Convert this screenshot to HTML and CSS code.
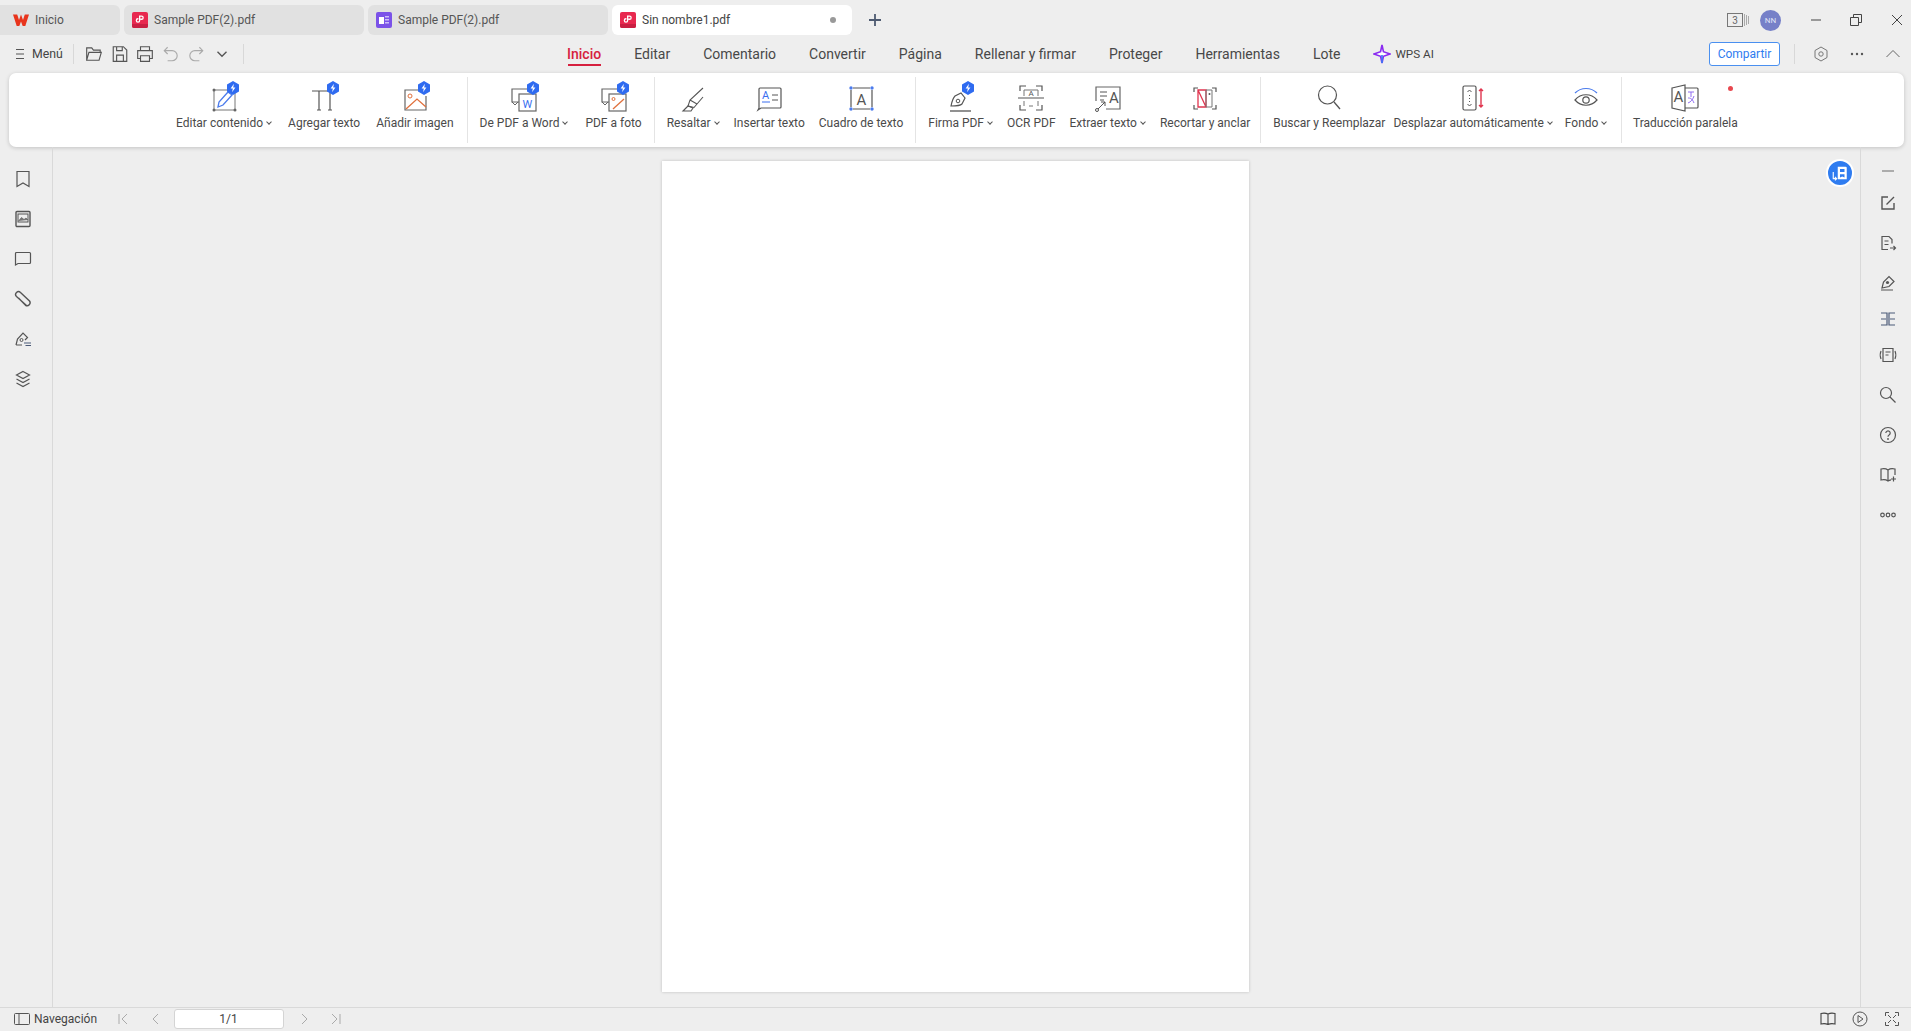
FILE: index.html
```html
<!DOCTYPE html>
<html lang="es">
<head>
  <meta charset="UTF-8">
  <title>Sin nombre1.pdf - WPS Office</title>
  <link rel="stylesheet" href="styles.css">
</head>
<body>

  <svg class="defs" width="0" height="0">
    <symbol id="badge" viewBox="0 0 14 14">
      <path d="M7 0l6 3.4v7.2L7 14l-6-3.4V3.4z" fill="#2f6bf0"/>
      <path d="M7.9 2.8L4.6 7.6h2.2l-.7 3.6 3.3-4.8H7.2z" fill="#fff"/>
    </symbol>
    <symbol id="pdf" viewBox="0 0 16 16">
      <rect width="16" height="16" rx="2" fill="#e8284f"/>
      <path d="M0 12h16v2a2 2 0 0 1-2 2H2a2 2 0 0 1-2-2z" fill="#c91f42"/>
      <path d="M7 3.5h2.6a2.2 2.2 0 0 1 0 4.4H8.4V6.6h1.2a.9.9 0 0 0 0-1.8H8.3v3.6a2.3 2.3 0 1 1-2.3-2.3h.4v1.3H6a1 1 0 1 0 1 1z" fill="#fff"/>
    </symbol>
  </svg>

  <!-- tabs -->
  <div class="tabbar">
    <div class="tab tab-home">
      <svg class="tab-icon" viewBox="0 0 16 16"><path d="M0 2.5h4.2L6 8l2-5.500L10 8l1.800-5.500H16L12.300 14H9.700L8 9.500 6.300 14H3.700z" fill="#e8341c"/></svg>
      <span>Inicio</span>
    </div>
    <div class="tab">
      <svg class="tab-icon"><use href="#pdf"/></svg>
      <span>Sample PDF(2).pdf</span>
    </div>
    <div class="tab">
      <svg class="tab-icon" viewBox="0 0 16 16"><rect width="16" height="16" rx="2" fill="#7b52e8"/><rect x="3" y="5" width="5" height="7" fill="#fff"/><rect x="9" y="4" width="4" height="1.500" fill="#cdbdf7"/><rect x="9" y="7" width="4" height="1.500" fill="#cdbdf7"/><rect x="9" y="10" width="4" height="1.500" fill="#cdbdf7"/></svg>
      <span>Sample PDF(2).pdf</span>
    </div>
    <div class="tab tab-active">
      <svg class="tab-icon"><use href="#pdf"/></svg>
      <span>Sin nombre1.pdf</span>
      <i class="tab-dot"></i>
    </div>
    <svg class="tab-add" viewBox="0 0 14 14"><path d="M7 1v12M1 7h12" stroke="#4d5a70" stroke-width="1.800" fill="none"/></svg>

    <div class="win-controls">
      <svg class="win-count" viewBox="0 0 22 16"><rect x=".5" y="1.500" width="15" height="13" fill="none" stroke="#777"/><path d="M17.500 2v12M19.500 3v10M21.500 4v8" stroke="#aaa" fill="none"/><text x="8" y="12" class="count-text">3</text></svg>
      <span class="avatar">NN</span>
      <svg class="win-btn win-min" viewBox="0 0 12 12"><path d="M1 6h10" stroke="#444" fill="none"/></svg>
      <svg class="win-btn win-max" viewBox="0 0 12 12"><path d="M.5 3.500h8v8h-8zM3.500 3.500v-3h8v8h-3" stroke="#444" fill="none"/></svg>
      <svg class="win-btn" viewBox="0 0 12 12"><path d="M1 1l10 10M11 1L1 11" stroke="#444" fill="none"/></svg>
    </div>
  </div>

  <!-- menu row -->
  <div class="menubar">
    <div class="quick">
      <svg class="menu-lines" viewBox="0 0 10 12"><path d="M1 1.500h8M1 6h8M1 10.500h8" stroke="#555" stroke-width="1.200" fill="none"/></svg>
      <span class="menu-label">Menú</span>
      <i class="quick-sep"></i>
      <svg class="quick-icon" viewBox="0 0 16 16"><path d="M1.500 13.500v-11h4.500l1.500 2h6v2M1.500 13.500l2-7h11l-2 7z" fill="none" stroke="#555"/></svg>
      <svg class="quick-icon" viewBox="0 0 16 16"><path d="M2 1.500h9l3 3v10H2zM5 14.500V9h6v5.500M5 1.500V5h5V1.500" fill="none" stroke="#555"/></svg>
      <svg class="quick-icon" viewBox="0 0 16 16"><path d="M4 5V1.500h8V5M4 12H1.500V5h13v7H12M4 9.500h8v5H4z" fill="none" stroke="#555"/></svg>
      <svg class="quick-icon" viewBox="0 0 16 16"><path d="M5 2L2 5l3 3M2 5h7a4.500 4.500 0 0 1 0 9H5" fill="none" stroke="#aaa"/></svg>
      <svg class="quick-icon" viewBox="0 0 16 16"><path d="M11 2l3 3-3 3M14 5H7a4.500 4.500 0 0 0 0 9h4" fill="none" stroke="#aaa"/></svg>
      <svg class="quick-icon" viewBox="0 0 16 16"><path d="M4 6l4 4 4-4" fill="none" stroke="#555" stroke-width="1.200"/></svg>
      <i class="quick-sep"></i>
    </div>

    <nav class="nav">
      <a class="nav-item nav-active">Inicio</a>
      <a class="nav-item">Editar</a>
      <a class="nav-item">Comentario</a>
      <a class="nav-item">Convertir</a>
      <a class="nav-item">Página</a>
      <a class="nav-item">Rellenar y firmar</a>
      <a class="nav-item">Proteger</a>
      <a class="nav-item">Herramientas</a>
      <a class="nav-item">Lote</a>
      <a class="nav-ai">
        <svg viewBox="0 0 20 22"><path d="M10 1l1.600 7.500L19 11l-7.400 2.500L10 21l-1.600-7.500L1 11l7.400-2.500z" fill="#fff" stroke="#8a2bf0" stroke-width="1.800"/><path d="M10 12v9" stroke="#3a7bf5" stroke-width="1.800"/></svg>
        <span>WPS AI</span>
      </a>
    </nav>

    <div class="menu-right">
      <button class="share">Compartir</button>
      <i class="quick-sep"></i>
      <svg class="menu-icon" viewBox="0 0 16 16"><path d="M8 1l6 3.500v7L8 15l-6-3.500v-7z" fill="none" stroke="#777"/><circle cx="8" cy="8" r="2.200" fill="none" stroke="#777"/></svg>
      <svg class="menu-icon" viewBox="0 0 16 16"><circle cx="3" cy="8" r="1.200" fill="#555"/><circle cx="8" cy="8" r="1.200" fill="#555"/><circle cx="13" cy="8" r="1.200" fill="#555"/></svg>
      <svg class="menu-icon" viewBox="0 0 16 16"><path d="M1.500 11L8 4.500 14.500 11" fill="none" stroke="#666"/></svg>
    </div>
  </div>

  <!-- ribbon -->
  <div class="ribbon">
    <div class="group group-content">
      <div class="tool">
        <svg class="tool-icon" viewBox="0 0 32 32">
          <rect x="6" y="9" width="21" height="20" fill="none" stroke="#777"/>
          <g fill="#666"><circle cx="6" cy="9" r="1.500"/><circle cx="27" cy="9" r="1.500"/><circle cx="6" cy="29" r="1.500"/><circle cx="27" cy="29" r="1.500"/></g>
          <path d="M10 26l1-5 9-10 4 3-9 10z" fill="#fff" stroke="#4b7bec" stroke-width="1.300"/>
          <use href="#badge" x="18" y="0" width="14" height="14"/>
        </svg>
        <span class="tool-label">Editar contenido<i class="caret"></i></span>
      </div>
      <div class="tool">
        <svg class="tool-icon" viewBox="0 0 32 32">
          <path d="M4 10h20M11 10v19M22 10v19M9 29h4M20 29h4" fill="none" stroke="#555" stroke-width="1.200"/>
          <use href="#badge" x="18" y="0" width="14" height="14"/>
        </svg>
        <span class="tool-label">Agregar texto</span>
      </div>
      <div class="tool">
        <svg class="tool-icon" viewBox="0 0 32 32">
          <path d="M19 9H6v20h21V15" fill="none" stroke="#666" stroke-width="1.200"/>
          <circle cx="11" cy="15" r="2" fill="none" stroke="#e0703c"/>
          <path d="M7 28l11-10 9 8" fill="none" stroke="#e0703c" stroke-width="1.300"/>
          <use href="#badge" x="18" y="0" width="14" height="14"/>
        </svg>
        <span class="tool-label">Añadir imagen</span>
      </div>
    </div>

    <div class="group group-convert">
      <div class="tool">
        <svg class="tool-icon" viewBox="0 0 32 32">
          <path d="M11 21H4V8h18" fill="none" stroke="#666" stroke-width="1.200"/>
          <path d="M4 21l3 3 3-3" fill="none" stroke="#666"/>
          <rect x="11" y="13" width="17" height="17" fill="#fff" stroke="#666" stroke-width="1.200"/>
          <text x="19.500" y="26.500" class="icon-letter icon-blue">W</text>
          <use href="#badge" x="18" y="0" width="14" height="14"/>
        </svg>
        <span class="tool-label">De PDF a Word<i class="caret"></i></span>
      </div>
      <div class="tool">
        <svg class="tool-icon" viewBox="0 0 32 32">
          <path d="M11 21H4V8h18" fill="none" stroke="#666" stroke-width="1.200"/>
          <path d="M4 21l3 3 3-3" fill="none" stroke="#666"/>
          <rect x="11" y="13" width="17" height="17" fill="#fff" stroke="#666" stroke-width="1.200"/>
          <circle cx="15.500" cy="18" r="1.500" fill="none" stroke="#e0703c"/>
          <path d="M15 28l11-10" stroke="#e0703c" stroke-width="1.300" fill="none"/>
          <use href="#badge" x="18" y="0" width="14" height="14"/>
        </svg>
        <span class="tool-label">PDF a foto</span>
      </div>
    </div>

    <div class="group">
      <div class="tool">
        <svg class="tool-icon" viewBox="0 0 32 32">
          <path d="M26 7L13 19l-2 6 6 1.500 3-3.500 6-7M13 19l7 4" fill="none" stroke="#555" stroke-width="1.100"/>
          <path d="M6 30l5-5 5 2-2 3z" fill="none" stroke="#555" stroke-width="1.100"/>
        </svg>
        <span class="tool-label">Resaltar<i class="caret"></i></span>
      </div>
      <div class="tool">
        <svg class="tool-icon" viewBox="0 0 32 32">
          <path d="M6 27V8a1 1 0 0 1 1-1h20a1 1 0 0 1 1 1v18a1 1 0 0 1-1 1H8l-3 2z" fill="none" stroke="#555" stroke-width="1.200"/>
          <text x="12.500" y="18" class="icon-letter icon-blue">A</text>
          <path d="M9 21h8" stroke="#3a6ff0" fill="none"/>
          <path d="M19 14h6M19 19h6" stroke="#555" fill="none"/>
        </svg>
        <span class="tool-label">Insertar texto</span>
      </div>
      <div class="tool">
        <svg class="tool-icon" viewBox="0 0 32 32">
          <path d="M8 7h17M8 28h17M6 9v17M27 9v17" stroke="#555" fill="none" stroke-width="1.200"/>
          <g fill="#4b7bec"><circle cx="6" cy="7" r="1.700"/><circle cx="27" cy="7" r="1.700"/><circle cx="6" cy="28" r="1.700"/><circle cx="27" cy="28" r="1.700"/></g>
          <text x="16.500" y="24" class="icon-letter icon-big">A</text>
        </svg>
        <span class="tool-label">Cuadro de texto</span>
      </div>
    </div>

    <div class="group group-sign">
      <div class="tool">
        <svg class="tool-icon" viewBox="0 0 32 32">
          <path d="M6 25c1-5 2-8 4-10l6-3 4 5-3 6c-2 2-6 2-11 2z" fill="none" stroke="#555" stroke-width="1.200"/>
          <circle cx="13" cy="20" r="1.800" fill="none" stroke="#555"/>
          <path d="M5 30h21" stroke="#555" stroke-width="1.300" fill="none"/>
          <use href="#badge" x="16" y="0" width="14" height="14"/>
        </svg>
        <span class="tool-label">Firma PDF<i class="caret"></i></span>
      </div>
      <div class="tool">
        <svg class="tool-icon" viewBox="0 0 32 32">
          <path d="M5 10V5h6M21 5h6v5M5 24v5h6M21 29h6v-5M3 17h26" stroke="#555" fill="none" stroke-width="1.200"/>
          <path d="M9 15V9h14v6M9 20v5M23 20v5M14 25h4" stroke="#777" fill="none"/>
          <text x="16" y="15" class="icon-letter icon-small">A</text>
        </svg>
        <span class="tool-label">OCR PDF</span>
      </div>
      <div class="tool">
        <svg class="tool-icon" viewBox="0 0 32 32">
          <path d="M4 20V6h24v22H14" fill="none" stroke="#666" stroke-width="1.200"/>
          <path d="M8 11h7M8 15h7M8 19h4" stroke="#555" fill="none"/>
          <path d="M5 29l8-8M9 21h4v4" stroke="#555" fill="none"/>
          <circle cx="5" cy="29" r="1.500" fill="#fff" stroke="#555"/>
          <text x="22" y="22" class="icon-letter icon-big">A</text>
        </svg>
        <span class="tool-label">Extraer texto<i class="caret"></i></span>
      </div>
      <div class="tool">
        <svg class="tool-icon" viewBox="0 0 32 32">
          <path d="M9 7H5v4M23 7h4v4M9 28H5v-4M23 28h4v-4" fill="none" stroke="#555" stroke-width="1.200"/>
          <path d="M9 9h8v17H9zM9 9l8 17" fill="none" stroke="#e0354f" stroke-width="1.300"/>
          <path d="M17 9v17h6V9z" fill="none" stroke="#777"/>
          <circle cx="20.500" cy="13" r="1" fill="#555"/>
        </svg>
        <span class="tool-label">Recortar y anclar</span>
      </div>
    </div>

    <div class="group group-search">
      <div class="tool">
        <svg class="tool-icon" viewBox="0 0 32 32">
          <circle cx="14.500" cy="14" r="9" fill="none" stroke="#555" stroke-width="1.200"/>
          <path d="M21 21l6 7" stroke="#555" stroke-width="1.300" fill="none"/>
        </svg>
        <span class="tool-label">Buscar y Reemplazar</span>
      </div>
      <div class="tool tool-snug">
        <svg class="tool-icon" viewBox="0 0 32 32">
          <rect x="6" y="5" width="13" height="24" rx="1.500" fill="none" stroke="#555" stroke-width="1.200"/>
          <path d="M10.500 11l2-2 2 2M10.500 23l2 2 2-2M12.500 14v1M12.500 17v1M12.500 20v1" fill="none" stroke="#555"/>
          <path d="M24 8v18M22 10l2-2 2 2M22 24l2 2 2-2" fill="none" stroke="#e0354f" stroke-width="1.400"/>
        </svg>
        <span class="tool-label">Desplazar automáticamente<i class="caret"></i></span>
      </div>
      <div class="tool">
        <svg class="tool-icon" viewBox="0 0 32 32">
          <path d="M5 12c6-6 16-6 22 0" fill="none" stroke="#4b7bec" stroke-width="1.200"/>
          <path d="M5 19c6-7 16-7 22 0-6 7-16 7-22 0z" fill="none" stroke="#555" stroke-width="1.200"/>
          <circle cx="16" cy="19" r="3.200" fill="none" stroke="#555" stroke-width="1.200"/>
        </svg>
        <span class="tool-label">Fondo<i class="caret"></i></span>
      </div>
    </div>

    <div class="group group-last">
      <div class="tool tool-new">
        <svg class="tool-icon" viewBox="0 0 32 32">
          <path d="M3 7l13-3v26L3 27z" fill="#fff" stroke="#555" stroke-width="1.200"/>
          <path d="M16 7h12a1 1 0 0 1 1 1v18a1 1 0 0 1-1 1H16" fill="none" stroke="#555" stroke-width="1.200"/>
          <text x="9.500" y="21" class="icon-letter icon-big">A</text>
          <path d="M19 11h6M22 11v5M19 17c2 0 4 0 6 5M25 15c-1 3-3 6-6 7" stroke="#8f6df2" fill="none"/>
        </svg>
        <span class="tool-label">Traducción paralela</span>
        <i class="new-dot"></i>
      </div>
    </div>
  </div>

  <!-- work area -->
  <div class="main">
    <aside class="rail rail-left">
      <div class="rail-btn"><svg viewBox="0 0 18 18"><path d="M3 1.500h12v15l-6-3.500-6 3.500z" fill="none" stroke="#555" stroke-width="1.200"/></svg></div>
      <div class="rail-btn"><svg viewBox="0 0 18 18"><rect x="2" y="1.500" width="14" height="15" rx="1" fill="none" stroke="#555" stroke-width="1.400"/><rect x="4" y="4" width="10" height="8" fill="none" stroke="#555"/><path d="M4.500 11l3-3.500 2.500 2 2-1.500 2 2" fill="#777" stroke="#555" stroke-width=".6"/></svg></div>
      <div class="rail-btn"><svg viewBox="0 0 18 18"><path d="M1.500 15V3.500a1 1 0 0 1 1-1h13a1 1 0 0 1 1 1v9a1 1 0 0 1-1 1H4z" fill="none" stroke="#555" stroke-width="1.200"/></svg></div>
      <div class="rail-btn"><svg viewBox="0 0 18 18"><path d="M12.500 15.500L2.500 6.500a2.800 2.800 0 0 1 4-4L15.500 11a3 3 0 0 1-4 4.300L4.500 8" fill="none" stroke="#555" stroke-width="1.400"/></svg></div>
      <div class="rail-btn"><svg viewBox="0 0 18 18"><path d="M2 15l1.500-6L9 3l4.500 4.500L11 10M2 15h6" fill="none" stroke="#555" stroke-width="1.200"/><circle cx="7.500" cy="10" r="1.500" fill="none" stroke="#555"/><path d="M10 13h7M11.500 15.500h5.500" stroke="#4b5a78" fill="none"/></svg></div>
      <div class="rail-btn"><svg viewBox="0 0 18 18"><path d="M9 1.500l6.500 3.500L9 8.500 2.500 5zM2.500 9L9 12.500 15.500 9M2.500 13L9 16.500l6.500-3.500" fill="none" stroke="#555" stroke-width="1.200"/></svg></div>
    </aside>

    <section class="canvas">
      <div class="page"></div>
      <div class="float-btn">
        <svg viewBox="0 0 16 16"><path d="M6 2.500h7a1 1 0 0 1 1 1v10H6z" fill="#fff"/><path d="M8 4.500h4V7H8zM8 9h4v3l-2-1-2 1z" fill="#2f7cf0"/><path d="M2 7v6h3M3.500 11.500L5 13l-1.500 1.500" fill="none" stroke="#fff"/></svg>
      </div>
    </section>

    <aside class="rail rail-right">
      <div class="rail-btn rail-dash"><svg viewBox="0 0 18 18"><path d="M3 9h12" stroke="#888" stroke-width="1.300"/></svg></div>
      <div class="rail-btn"><svg viewBox="0 0 18 18"><path d="M9 3H3v12h12V9M7.500 10.500L15 3" fill="none" stroke="#555" stroke-width="1.400"/></svg></div>
      <div class="rail-btn"><svg viewBox="0 0 18 18"><path d="M9 15.500H3v-13h7l3 3v4M5.500 7h4M5.500 10.500h4M11 14h5M14.500 12l2 2-2 2" fill="none" stroke="#555" stroke-width="1.200"/></svg></div>
      <div class="rail-btn"><svg viewBox="0 0 18 18"><path d="M3 14l1.500-6L10 2.500l5 5-5 5z" fill="none" stroke="#555" stroke-width="1.200"/><circle cx="8.500" cy="8.500" r="1.600" fill="#555"/><path d="M2 16h12" stroke="#555" fill="none"/></svg></div>
      <div class="rail-btn rail-short"><svg viewBox="0 0 18 18"><path d="M2 3h6v12H2M16 3h-6v12h6M2 9h5M11 9h5" fill="none" stroke="#4b5a78" stroke-width="1.200"/></svg></div>
      <div class="rail-btn"><svg viewBox="0 0 18 18"><path d="M4 2.500h10v13H4zM6.500 6h5M6.500 9h3M2 5c-1 2-1 6 0 8M16 5c1 2 1 6 0 8" fill="none" stroke="#555" stroke-width="1.200"/></svg></div>
      <div class="rail-btn"><svg viewBox="0 0 18 18"><circle cx="7" cy="7" r="5.500" fill="none" stroke="#555" stroke-width="1.200"/><path d="M11 11l5.500 5.500" stroke="#555" stroke-width="1.300"/></svg></div>
      <div class="rail-btn"><svg viewBox="0 0 18 18"><circle cx="9" cy="9" r="7.500" fill="none" stroke="#555" stroke-width="1.200"/><path d="M6.800 7a2.200 2.200 0 1 1 3.300 2c-.8.500-1.100.9-1.100 1.800" fill="none" stroke="#555" stroke-width="1.200"/><circle cx="9" cy="13" r=".9" fill="#555"/></svg></div>
      <div class="rail-btn"><svg viewBox="0 0 18 18"><path d="M9 4C7 2.500 4 2.500 2 3v11c2-.5 5-.5 7 1 1-.7 2-1 3-1.200M9 4c2-1.500 5-1.500 7-1v6M9 4v11M12 13h5M14.500 10.500v5" fill="none" stroke="#555" stroke-width="1.200"/></svg></div>
      <div class="rail-btn"><svg viewBox="0 0 18 18"><g fill="none" stroke="#555" stroke-width="1.200"><circle cx="3.500" cy="9" r="1.800"/><circle cx="9" cy="9" r="1.800"/><circle cx="14.500" cy="9" r="1.800"/></g></svg></div>
    </aside>
  </div>

  <!-- status bar -->
  <footer class="status">
    <div class="status-left">
      <svg class="status-icon" viewBox="0 0 16 14"><rect x=".5" y="1.500" width="15" height="11" rx="1" fill="none" stroke="#555"/><path d="M5 1.500v11" stroke="#555"/></svg>
      <span class="nav-label">Navegación</span>
      <svg class="pager" viewBox="0 0 12 12"><path d="M2 1v10M10 1L5 6l5 5" fill="none" stroke="#aaa"/></svg>
      <svg class="pager pager-prev" viewBox="0 0 12 12"><path d="M8 1L3 6l5 5" fill="none" stroke="#aaa"/></svg>
      <div class="page-input">1/1</div>
      <svg class="pager" viewBox="0 0 12 12"><path d="M4 1l5 5-5 5" fill="none" stroke="#aaa"/></svg>
      <svg class="pager" viewBox="0 0 12 12"><path d="M10 1v10M2 1l5 5-5 5" fill="none" stroke="#aaa"/></svg>
    </div>
    <div class="status-right">
      <svg class="status-btn" viewBox="0 0 16 16"><path d="M8 3C6 2 3 2 1 2.500v10.500c2-.5 5-.5 7 .5 2-1 5-1 7-.5V2.500C13 2 10 2 8 3zM8 3v10.500" fill="none" stroke="#444" stroke-width="1.100"/></svg>
      <svg class="status-btn" viewBox="0 0 16 16"><circle cx="8" cy="8" r="7" fill="none" stroke="#555"/><path d="M6 4.500l5 3.500-5 3.500z" fill="none" stroke="#555"/></svg>
      <svg class="status-btn" viewBox="0 0 16 16"><path d="M1.500 5V1.500H5M11 1.500h3.500V5M1.500 11v3.500H5M14.500 11v3.500H11M4 4l3 3M12 4L9 7M4 12l3-3M12 12L9 9" fill="none" stroke="#555"/></svg>
    </div>
  </footer>

</body>
</html>
```

FILE: styles.css
```css
* {
  margin: 0;
  padding: 0;
  box-sizing: border-box;
}

html, body {
  height: 100%;
}

body {
  display: flex;
  flex-direction: column;
  overflow: hidden;
  background: #eeeeee;
  color: #444;
  font-family: Roboto, "Liberation Sans", sans-serif;
  font-size: 12px;
}

.defs {
  position: absolute;
}

/* Tabs */
.tabbar {
  display: flex;
  align-items: center;
  gap: 4px;
  height: 30px;
  margin-top: 5px;
  flex-shrink: 0;
}

.tab {
  display: flex;
  align-items: center;
  gap: 6px;
  width: 240px;
  height: 30px;
  padding: 0 8px;
  background: #e1e1e1;
  border-radius: 6px;
  font-size: 12px;
  color: #555;
}

.tab-home {
  width: 120px;
  padding-left: 13px;
  border-radius: 0 6px 6px 0;
}

.tab-active {
  background: #fff;
  color: #444;
}

.tab-icon {
  width: 16px;
  height: 16px;
  flex-shrink: 0;
}

.tab-dot {
  width: 6px;
  height: 6px;
  margin-left: auto;
  margin-right: 8px;
  border-radius: 50%;
  background: #999;
}

.tab-add {
  width: 14px;
  height: 14px;
  margin-left: 12px;
}

.win-controls {
  display: flex;
  align-items: center;
  margin-left: auto;
}

.win-count {
  width: 22px;
  height: 16px;
  margin-right: 11px;
}

.count-text {
  font-size: 10px;
  text-anchor: middle;
  fill: #666;
}

.avatar {
  width: 21px;
  height: 21px;
  margin-right: 29px;
  border-radius: 50%;
  background: #7680c8;
  color: #dfe2f5;
  font-size: 8px;
  line-height: 21px;
  text-align: center;
}

.win-btn {
  width: 12px;
  height: 12px;
  margin-right: 28px;
}

.win-btn:last-child {
  margin-right: 8px;
}

.win-max {
  margin-right: 29px;
}

/* Menu row */
.menubar {
  display: flex;
  align-items: center;
  height: 38px;
  flex-shrink: 0;
}

.quick {
  display: flex;
  align-items: center;
  width: 567px;
  padding-left: 15px;
  flex-shrink: 0;
}

.menu-lines {
  width: 10px;
  height: 12px;
  margin-right: 7px;
}

.menu-label {
  width: 41px;
  font-size: 12.300px;
  color: #444;
}

.quick-sep {
  width: 1px;
  height: 20px;
  background: #d8d8d8;
}

.quick-icon {
  width: 18px;
  height: 18px;
  margin-left: 11px;
}

.quick-icon + .quick-icon {
  margin-left: 7.600px;
}

.quick-icon + .quick-sep {
  margin-left: 12px;
}

.nav {
  display: flex;
  align-items: center;
  height: 38px;
  gap: 33px;
  font-size: 14px;
}

.nav-item {
  position: relative;
  color: #484848;
  white-space: nowrap;
}

.nav-active {
  color: #d6213f;
  font-weight: 500;
}

.nav-active::after {
  content: "";
  position: absolute;
  left: 1px;
  right: 0;
  bottom: -4px;
  height: 2px;
  background: #d6213f;
}

.nav-ai {
  display: flex;
  align-items: center;
  gap: 4px;
  font-size: 11.700px;
  color: #444;
}

.nav-ai svg {
  width: 18px;
  height: 20px;
}

.menu-right {
  display: flex;
  align-items: center;
  margin-left: auto;
  padding-right: 10px;
}

.share {
  width: 71px;
  height: 24px;
  margin-right: 14px;
  background: #fff;
  border: 1px solid #4a90f0;
  border-radius: 3px;
  color: #2f7cf0;
  font-family: inherit;
  font-size: 12px;
}

.menu-icon {
  width: 16px;
  height: 16px;
  margin-left: 20px;
}

.menu-icon:first-of-type {
  margin-left: 18px;
}

/* Ribbon */
.ribbon {
  display: flex;
  height: 74px;
  margin: 0 7px 0 9px;
  padding-left: 155px;
  background: #fff;
  border-radius: 7px;
  box-shadow: 0 1px 4px rgba(0, 0, 0, 0.18);
  flex-shrink: 0;
}

.group {
  display: flex;
  gap: 14px;
  margin: 4px 0;
  padding: 0 12px;
  border-right: 1px solid #e4e4e4;
}

.group-content {
  gap: 16px;
  padding-right: 13px;
}

.group-convert {
  gap: 17px;
}

.group-sign {
  padding-right: 10px;
}

.group-search {
  gap: 12px;
  padding-right: 13.500px;
}

.group-last {
  padding-left: 11px;
  border-right: none;
}

.tool {
  position: relative;
  display: flex;
  flex-direction: column;
  align-items: center;
  white-space: nowrap;
}

.tool-snug {
  margin-left: -4px;
}

.tool-icon {
  width: 32px;
  height: 32px;
  margin-top: 4px;
  overflow: visible;
}

.tool-label {
  margin-top: 2px;
  font-size: 12px;
  line-height: 16px;
  color: #4a4a4a;
}

.caret {
  display: inline-block;
  width: 4px;
  height: 4px;
  margin: 0 1px 3px 4px;
  border-right: 1.300px solid #555;
  border-bottom: 1.300px solid #555;
  transform: rotate(45deg);
}

.icon-letter {
  font-family: Roboto, sans-serif;
  font-size: 11px;
  text-anchor: middle;
  fill: #555;
}

.icon-blue {
  fill: #3a6ff0;
}

.icon-big {
  font-size: 15px;
}

.icon-small {
  font-size: 8px;
}

.new-dot {
  position: absolute;
  top: 9px;
  right: 5px;
  width: 5px;
  height: 5px;
  border-radius: 50%;
  background: #e8484f;
}

/* Work area */
.main {
  display: flex;
  flex: 1;
  min-height: 0;
}

.rail {
  flex-shrink: 0;
  padding-top: 12px;
}

.rail-left {
  width: 53px;
  padding-right: 6px;
  border-right: 1px solid #d9d9d9;
}

.rail-right {
  width: 51px;
  padding-left: 3px;
  border-left: 1px solid #d9d9d9;
}

.rail-btn {
  display: flex;
  align-items: center;
  justify-content: center;
  height: 40px;
}

.rail-btn svg {
  width: 18px;
  height: 18px;
}

.rail-dash {
  height: 24px;
}

.rail-short {
  height: 32px;
}

.canvas {
  position: relative;
  flex: 1;
  display: flex;
  justify-content: center;
  padding-top: 14px;
}

.page {
  width: 587px;
  height: 831px;
  margin-right: 2px;
  background: #fff;
  box-shadow: 0 0 3px rgba(0, 0, 0, 0.2);
}

.float-btn {
  position: absolute;
  top: 12px;
  right: 6px;
  display: flex;
  align-items: center;
  justify-content: center;
  width: 28px;
  height: 28px;
  border: 2px solid #fff;
  border-radius: 50%;
  background: #2f7cf0;
}

.float-btn svg {
  width: 18px;
  height: 18px;
}

/* Status bar */
.status {
  display: flex;
  align-items: center;
  justify-content: space-between;
  height: 24px;
  padding-bottom: 2px;
  flex-shrink: 0;
  border-top: 1px solid #d9d9d9;
}

.status-left {
  display: flex;
  align-items: center;
}

.status-icon {
  width: 16px;
  height: 14px;
  margin-left: 14px;
}

.nav-label {
  width: 83px;
  margin-left: 4px;
  font-size: 12px;
}

.pager {
  width: 12px;
  height: 12px;
  margin-right: 20.500px;
}

.pager-prev {
  margin-right: 12px;
}

.page-input {
  width: 110px;
  height: 20px;
  margin-right: 14px;
  background: #fff;
  border: 1px solid #d4d4d4;
  border-radius: 3px;
  font-size: 12px;
  line-height: 18px;
  text-align: center;
}

.status-right {
  display: flex;
  align-items: center;
  gap: 16px;
  padding-right: 11px;
}

.status-btn {
  width: 16px;
  height: 16px;
}
```
